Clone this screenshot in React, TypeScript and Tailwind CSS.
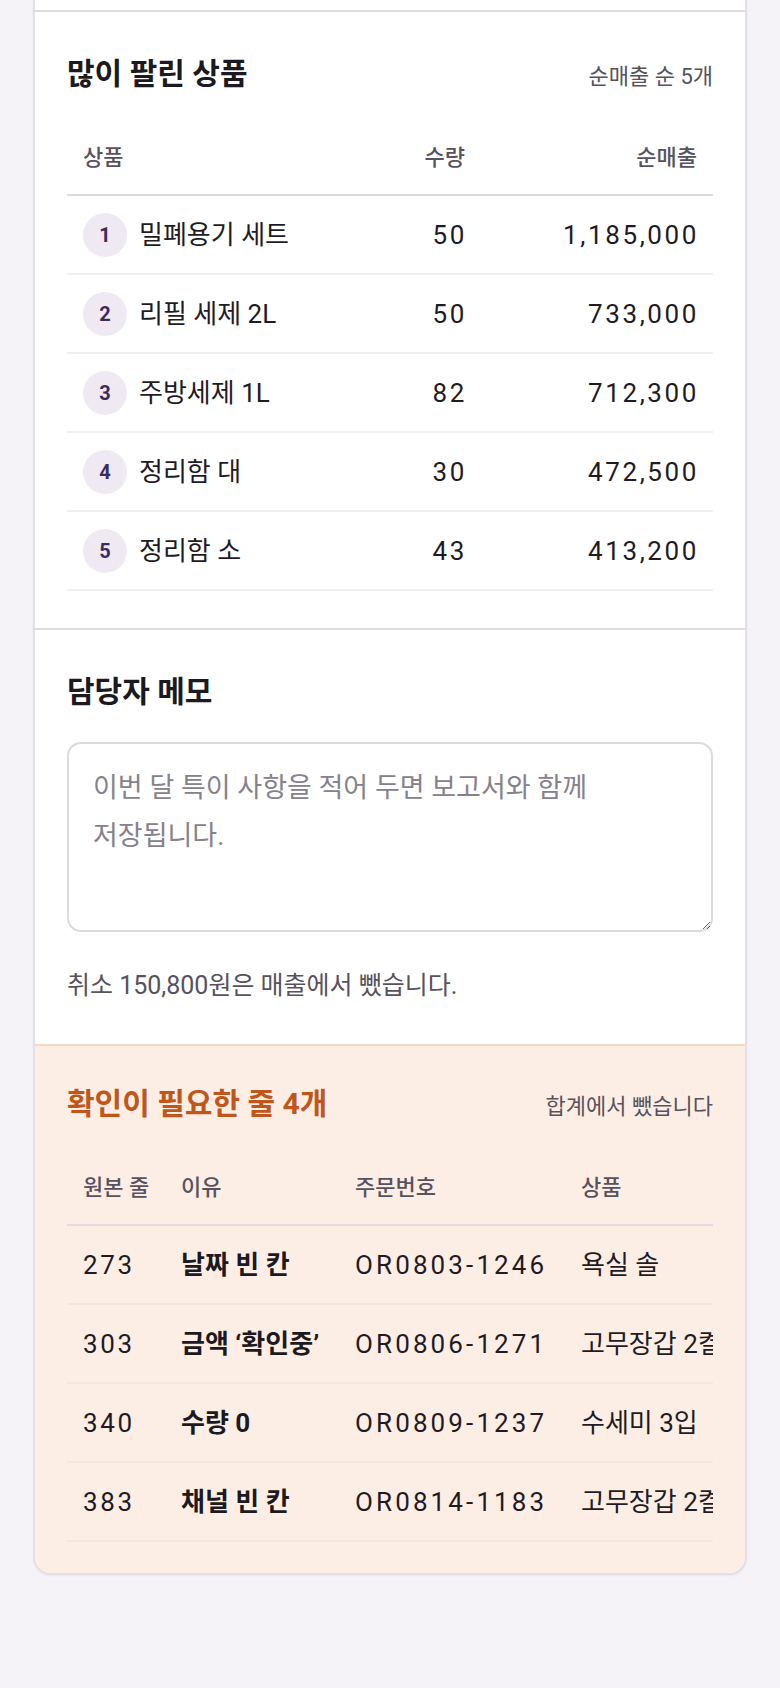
const topProducts = [
  { rank: 1, name: "밀폐용기 세트", qty: 50, sales: "1,185,000" },
  { rank: 2, name: "리필 세제 2L", qty: 50, sales: "733,000" },
  { rank: 3, name: "주방세제 1L", qty: 82, sales: "712,300" },
  { rank: 4, name: "정리함 대", qty: 30, sales: "472,500" },
  { rank: 5, name: "정리함 소", qty: 43, sales: "413,200" },
];

const issues = [
  { line: 273, reason: "날짜 빈 칸", order: "OR0803-1246", product: "욕실 솔" },
  { line: 303, reason: "금액 ‘확인중’", order: "OR0806-1271", product: "고무장갑 2켤레" },
  { line: 340, reason: "수량 0", order: "OR0809-1237", product: "수세미 3입" },
  { line: 383, reason: "채널 빈 칸", order: "OR0814-1183", product: "고무장갑 2켤레" },
];

function SectionHead({ title, meta, tone }: { title: string; meta?: string; tone?: "warn" }) {
  return (
    <div className="flex items-baseline justify-between">
      <h2 className={"text-[30px] leading-[36px] font-bold " + (tone === "warn" ? "text-[#c1561b]" : "text-[#1c1920]")}>
        {title}
      </h2>
      {meta ? <span className="text-[22px] leading-[30px] text-[#57525e]">{meta}</span> : null}
    </div>
  );
}

export default function App() {
  return (
    <div className="min-h-[1688px] bg-[#f5f3f7] pb-10 font-['Roboto','Noto_Sans_CJK_KR',sans-serif] text-[#1f1b24]">
      <div className="mx-[33px] overflow-hidden rounded-b-[18px] border-x-2 border-b-2 border-[#e2dfe7] bg-white shadow-[0_1px_2px_rgba(60,40,80,0.06)]">
        <div className="h-[10px]" />

        <section className="border-t-2 border-[#dedbe1] px-8 pt-11 pb-[37px]">
          <SectionHead title="많이 팔린 상품" meta="순매출 순 5개" />
          <div className="mt-[30px]">
            <div className="grid grid-cols-[1fr_120px_232px] border-b-2 border-[#dddae0] py-[21px] text-[22px] leading-[30px] font-medium text-[#57525e]">
              <div className="pl-4">상품</div>
              <div className="pr-4 text-right">수량</div>
              <div className="pr-4 text-right">순매출</div>
            </div>
            {topProducts.map((p) => (
              <div
                key={p.rank}
                className="grid h-[79px] grid-cols-[1fr_120px_232px] items-center border-b-2 border-[#f1eff3]"
              >
                <div className="flex items-center gap-3 pl-4">
                  <span className="flex h-11 w-11 items-center justify-center rounded-full bg-[#efe9f4] text-[20px] font-bold text-[#3d2b5c]">
                    {p.rank}
                  </span>
                  <span className="text-[26px] leading-[32px]">{p.name}</span>
                </div>
                <div className="pr-[14px] text-right text-[26px] leading-[32px] tracking-[0.1em]">{p.qty}</div>
                <div className="pr-[14px] text-right text-[26px] leading-[32px] tracking-[0.1em]">{p.sales}</div>
              </div>
            ))}
          </div>
        </section>

        <section className="border-t-2 border-[#dedbe1] px-8 pt-11 pb-[42px]">
          <SectionHead title="담당자 메모" />
          <textarea
            className="mt-8 block h-[190px] w-full break-keep rounded-[14px] border-2 border-[#dcd9df] px-6 py-5 text-[27px] leading-[48px] text-[#1f1b24] outline-none placeholder:text-[#86818c]"
            placeholder="이번 달 특이 사항을 적어 두면 보고서와 함께 저장됩니다."
          />
          <p className="mt-[38px] text-[25px] leading-[32px] text-[#57525e]">취소 150,800원은 매출에서 뺐습니다.</p>
        </section>

        <section className="border-t-2 border-[#f3d8c3] bg-[#fdeee5] px-8 pt-10 pb-[31px]">
          <SectionHead title="확인이 필요한 줄 4개" meta="합계에서 뺐습니다" tone="warn" />
          <div className="mt-[30px] overflow-x-auto [scrollbar-width:none]">
            <div className="w-max min-w-full">
              <div className="grid grid-cols-[98px_174px_226px_220px] border-b-2 border-[#e5dae2] py-[21px] text-[22px] leading-[30px] font-medium text-[#57525e]">
                <div className="pl-4">원본 줄</div>
                <div className="pl-4">이유</div>
                <div className="pl-4">주문번호</div>
                <div className="pl-4">상품</div>
              </div>
              {issues.map((r) => (
                <div
                  key={r.line}
                  className="grid h-[79px] grid-cols-[98px_174px_226px_220px] items-center whitespace-nowrap border-b-2 border-[#f8e6dd]"
                >
                  <div className="pl-4 text-[26px] leading-[32px] tracking-[0.1em]">{r.line}</div>
                  <div className="pl-4 text-[26px] leading-[32px] font-bold text-[#1c1920]">{r.reason}</div>
                  <div className="pl-4 text-[26px] leading-[32px] tracking-[0.12em]">{r.order}</div>
                  <div className="pl-4 text-[26px] leading-[32px]">{r.product}</div>
                </div>
              ))}
            </div>
          </div>
        </section>
      </div>
    </div>
  );
}
